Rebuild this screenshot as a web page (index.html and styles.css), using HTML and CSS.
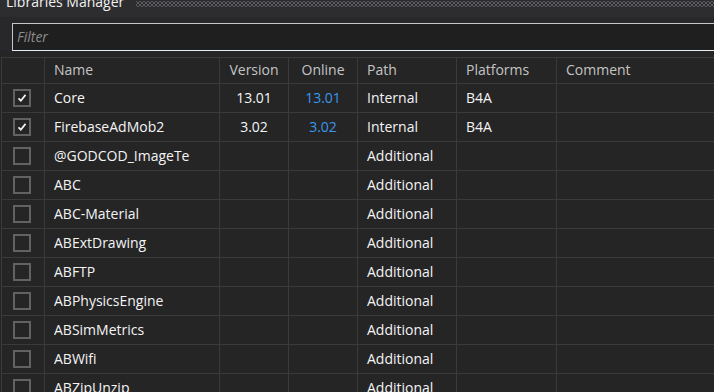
FILE: index.html
```html
<!DOCTYPE html>
<html lang="en">
<head>
    <meta charset="UTF-8">
    <title>Libraries Manager</title>
    <link rel="stylesheet" href="styles.css">
</head>
<body>
<div class="panel">
    <div class="titlebar">
        <span class="title">Libraries Manager</span>
        <span class="grip"></span>
    </div>
    <div class="filter-row">
        <div class="filter">Filter</div>
    </div>
    <table class="libs">
        <thead>
            <tr>
                <th class="c-check"></th>
                <th class="c-name">Name</th>
                <th class="c-ver center">Version</th>
                <th class="c-online center">Online</th>
                <th class="c-path">Path</th>
                <th class="c-plat">Platforms</th>
                <th class="c-comment">Comment</th>
            </tr>
        </thead>
        <tbody>
            <tr>
                <td><span class="box checked"><svg viewBox="0 0 18 18"><polyline points="4.5,9.5 7.5,12.5 13.5,5"/></svg></span></td>
                <td><span class="name">Core</span></td>
                <td class="center">13.01</td>
                <td class="center online">13.01</td>
                <td>Internal</td>
                <td>B4A</td>
                <td></td>
            </tr>
            <tr>
                <td><span class="box checked"><svg viewBox="0 0 18 18"><polyline points="4.5,9.5 7.5,12.5 13.5,5"/></svg></span></td>
                <td><span class="name">FirebaseAdMob2</span></td>
                <td class="center">3.02</td>
                <td class="center online">3.02</td>
                <td>Internal</td>
                <td>B4A</td>
                <td></td>
            </tr>
            <tr>
                <td><span class="box"></span></td>
                <td><span class="name">@GODCOD_ImageTest</span></td>
                <td></td><td></td>
                <td>Additional</td>
                <td></td><td></td>
            </tr>
            <tr>
                <td><span class="box"></span></td>
                <td><span class="name">ABC</span></td>
                <td></td><td></td>
                <td>Additional</td>
                <td></td><td></td>
            </tr>
            <tr>
                <td><span class="box"></span></td>
                <td><span class="name">ABC-Material</span></td>
                <td></td><td></td>
                <td>Additional</td>
                <td></td><td></td>
            </tr>
            <tr>
                <td><span class="box"></span></td>
                <td><span class="name">ABExtDrawing</span></td>
                <td></td><td></td>
                <td>Additional</td>
                <td></td><td></td>
            </tr>
            <tr>
                <td><span class="box"></span></td>
                <td><span class="name">ABFTP</span></td>
                <td></td><td></td>
                <td>Additional</td>
                <td></td><td></td>
            </tr>
            <tr>
                <td><span class="box"></span></td>
                <td><span class="name">ABPhysicsEngine</span></td>
                <td></td><td></td>
                <td>Additional</td>
                <td></td><td></td>
            </tr>
            <tr>
                <td><span class="box"></span></td>
                <td><span class="name">ABSimMetrics</span></td>
                <td></td><td></td>
                <td>Additional</td>
                <td></td><td></td>
            </tr>
            <tr>
                <td><span class="box"></span></td>
                <td><span class="name">ABWifi</span></td>
                <td></td><td></td>
                <td>Additional</td>
                <td></td><td></td>
            </tr>
            <tr>
                <td><span class="box"></span></td>
                <td><span class="name">ABZipUnzip</span></td>
                <td></td><td></td>
                <td>Additional</td>
                <td></td><td></td>
            </tr>
        </tbody>
    </table>
</div>
</body>
</html>
```

FILE: styles.css
```css
*{
    margin:0;
    padding:0;
    box-sizing:border-box;
}
html,body{
    width:714px;
    height:392px;
    overflow:hidden;
    background:#252526;
}
body{
    font-family:"Open Sans","Noto Sans",sans-serif;
    font-size:14px;
    color:#f4f4f4;
}
.panel{
    width:714px;
    height:392px;
    overflow:hidden;
}
/* title bar, text is cut at the top */
.titlebar{
    height:17px;
    background:#2d2d30;
    display:flex;
    align-items:flex-start;
    overflow:hidden;
}
.title{
    font-size:14px;
    line-height:15px;
    margin-top:-6px;
    padding-left:6px;
    padding-right:12px;
    color:#f1f1f1;
    white-space:nowrap;
}
.grip{
    flex:1;
    height:6px;
    margin-top:1px;
    background-image:
        radial-gradient(circle,#5a5a5e 0.8px,transparent 0.9px),
        radial-gradient(circle,#5a5a5e 0.8px,transparent 0.9px);
    background-size:4px 4px;
    background-position:0 0,2px 2px;
}
.filter-row{
    background:#28282a;
    padding:6px 0 0 12px;
    height:34px;
}
.filter{
    width:720px;
    height:28px;
    background:#1f1f1f;
    border-top:1px solid #c6c6c6;
    border-left:1px solid #c6c6c6;
    border-bottom:1px solid #e4ecf4;
    color:#8c8c8c;
    font-style:italic;
    line-height:26px;
    padding-left:4px;
}
.libs{
    margin-top:6px;
    margin-left:1px;
    border-collapse:collapse;
    table-layout:fixed;
    width:800px;
}
.libs th,
.libs td{
    border:1px solid #3a3a3b;
    padding:0 0 2px 9px;
    text-align:left;
    white-space:nowrap;
    overflow:hidden;
    font-weight:normal;
}
.libs th{
    height:26px;
    color:#c4c4c4;
}
.libs td{
    height:29px;
}
.libs .center{
    text-align:center;
    padding:0 0 2px 0;
}
.libs .online{
    color:#3898ec;
}
.c-check{width:43px;}
.c-name{width:175px;}
.c-ver{width:69px;}
.c-online{width:69px;}
.c-path{width:99px;}
.c-plat{width:100px;}
.libs td:first-child{
    padding:0 0 0 11px;
}
.name{
    display:block;
    width:136px;
    overflow:hidden;
}
.box{
    display:block;
    width:18px;
    height:18px;
    border:2px solid #626262;
    background:#252526;
}
.box svg{
    display:block;
    width:14px;
    height:14px;
    fill:none;
    stroke:#f4f4f4;
    stroke-width:2.2;
}
```
